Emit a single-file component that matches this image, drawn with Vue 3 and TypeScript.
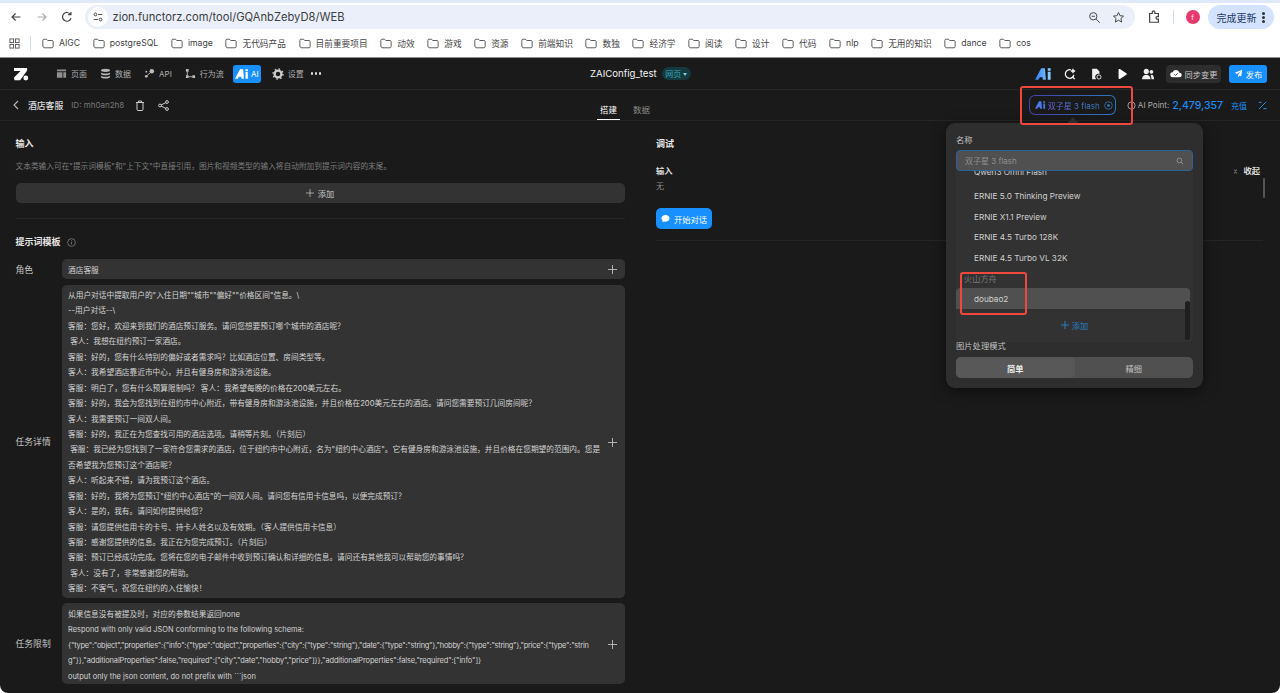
<script setup lang="ts">
const fw = (s: string): string =>
  s.replace(/,/g, '\uFF0C').replace(/:/g, '\uFF1A').replace(/\?/g, '\uFF1F').replace(/!/g, '\uFF01').replace(/\(/g, '\uFF08').replace(/\)/g, '\uFF09')

const bookmarks: string[] = ['AIGC','postgreSQL','image','无代码产品','目前重要项目','动效','游戏','资源','前端知识','数独','经济学','阅读','设计','代码','nlp','无用的知识','dance','cos']
const hint = fw('文本类输入可在"提示词模板"和"上下文"中直接引用,图片和视频类型的输入将自动附加到提示词内容的末尾。')
const detail: string[] = [
  '从用户对话中提取用户的"入住日期""城市""偏好""价格区间"信息。\\',
  '--用户对话--\\',
  '客服:您好,欢迎来到我们的酒店预订服务。请问您想要预订哪个城市的酒店呢?',
  ' 客人:我想在纽约预订一家酒店。',
  '客服:好的,您有什么特别的偏好或者需求吗?比如酒店位置、房间类型等。',
  '客人:我希望酒店靠近市中心,并且有健身房和游泳池设施。',
  '客服:明白了,您有什么预算限制吗? 客人:我希望每晚的价格在200美元左右。',
  '客服:好的,我会为您找到在纽约市中心附近,带有健身房和游泳池设施,并且价格在200美元左右的酒店。请问您需要预订几间房间呢?',
  '客人:我需要预订一间双人间。',
  '客服:好的,我正在为您查找可用的酒店选项。请稍等片刻。(片刻后)',
  ' 客服:我已经为您找到了一家符合您需求的酒店,位于纽约市中心附近,名为"纽约中心酒店"。它有健身房和游泳池设施,并且价格在您期望的范围内。您是否希望我为您预订这个酒店呢?',
  '客人:听起来不错,请为我预订这个酒店。',
  '客服:好的,我将为您预订"纽约中心酒店"的一间双人间。请问您有信用卡信息吗,以便完成预订?',
  '客人:是的,我有。请问如何提供给您?',
  '客服:请您提供信用卡的卡号、持卡人姓名以及有效期。(客人提供信用卡信息)',
  '客服:感谢您提供的信息。我正在为您完成预订。(片刻后)',
  '客服:预订已经成功完成。您将在您的电子邮件中收到预订确认和详细的信息。请问还有其他我可以帮助您的事情吗?',
  ' 客人:没有了,非常感谢您的帮助。',
  '客服:不客气,祝您在纽约的入住愉快!'
].map(fw)
const limits: { text: string; kind: string }[] = [
  { text: fw('如果信息没有被提及时,对应的参数结果返回none'), kind: 'cjk' },
  { text: 'Respond with only valid JSON conforming to the following schema:', kind: '' },
  { text: '{"type":"object","properties":{"info":{"type":"object","properties":{"city":{"type":"string"},"date":{"type":"string"},"hobby":{"type":"string"},"price":{"type":"strin', kind: 'json' },
  { text: 'g"}},"additionalProperties":false,"required":["city","date","hobby","price"]}},"additionalProperties":false,"required":["info"]}', kind: 'json2' },
  { text: 'output only the json content, do not prefix with ```json', kind: '' }
]
const models: string[] = ['Qwen3 Omni Flash','ERNIE 5.0 Thinking Preview','ERNIE X1.1 Preview','ERNIE 4.5 Turbo 128K','ERNIE 4.5 Turbo VL 32K']
</script>

<template>
  <div class="page">
    <header class="toolbar">
      <svg class="tb-icon" viewBox="0 0 16 16"><path d="M13 8H3.500M7.500 4 3.500 8l4 4" /></svg>
      <svg class="tb-icon dim" viewBox="0 0 16 16"><path d="M3 8h9.500M8.500 4l4 4-4 4" /></svg>
      <svg class="tb-icon" viewBox="0 0 16 16"><path d="M12.600 9.500A5 5 0 1 1 12 5M12.500 2.200V5.400H9.300" /></svg>
      <div class="omnibox">
        <span class="site-chip">
          <svg viewBox="0 0 14 14"><circle cx="4" cy="4" r="1.600" /><path d="M7 4h5M2 10h5" /><circle cx="10" cy="10" r="1.600" /></svg>
        </span>
        <span class="url">zion.functorz.com/tool/GQAnbZebyD8/WEB</span>
        <span class="grow"></span>
        <svg class="om-icon" viewBox="0 0 16 16"><circle cx="6.500" cy="6.500" r="4.500" /><path d="m10 10 4.500 4.500M4.500 6.500h4" /></svg>
        <svg class="om-icon" viewBox="0 0 16 16"><path d="m8 1.800 1.900 4 4.300.5-3.200 3 .9 4.300L8 11.400l-3.900 2.200.9-4.300-3.200-3 4.300-.5z" /></svg>
      </div>
      <svg class="tb-icon ext" viewBox="0 0 16 16"><path d="M3 4h3V2.500a1.500 1.500 0 0 1 3 0V4h4v3.500h-1.200a1.500 1.500 0 0 0 0 3H13V14H3z" /></svg>
      <span class="tb-sep"></span>
      <span class="avatar">f</span>
      <div class="update">完成更新 <i></i></div>
    </header>

    <nav class="bookmarks">
      <svg class="apps" viewBox="0 0 12 12"><rect x="1" y="1" width="4" height="4" /><rect x="7" y="1" width="4" height="4" /><rect x="1" y="7" width="4" height="4" /><rect x="7" y="7" width="4" height="4" /></svg>
      <span class="bm-sep"></span>
      <span v-for="b in bookmarks" :key="b" class="bm">
        <svg viewBox="0 0 14 12"><path d="M1 2.500C1 1.700 1.500 1 2.300 1h3l1.400 1.500h5c.8 0 1.300.6 1.300 1.300v5.700c0 .8-.5 1.500-1.300 1.500H2.300C1.500 10.500 1 9.800 1 9z" /></svg>
        {{ b }}
      </span>
    </nav>

    <div class="app">
      <div class="app-head">
        <div class="head-left">
          <svg class="logo" viewBox="0 0 18 16"><path d="M1 1h15v3L8 15H1.500L1 12l7.500-7.500H1z" fill="#fff" /><circle cx="14.500" cy="12.500" r="2.800" fill="#fff" /></svg>
          <span class="nav"><svg viewBox="0 0 12 12"><path d="M1 1.500h10v2H1zM1 4.500h6v6H1zM8 4.500h3v6H8z" fill="#8f8f8f" /></svg>页面</span>
          <span class="nav"><svg viewBox="0 0 12 12"><ellipse cx="6" cy="2.500" rx="5" ry="1.800" fill="#b5b5b5" /><path d="M1 5c1 1.500 9 1.500 10 0v1.500c-1 2-9 2-10 0zM1 8.500c1 1.500 9 1.500 10 0V10c-1 2-9 2-10 0z" fill="#b5b5b5" /></svg>数据</span>
          <span class="nav"><svg viewBox="0 0 12 12"><circle cx="8.500" cy="3.500" r="2.500" fill="#bbb" /><circle cx="2.500" cy="9" r="1.500" fill="#bbb" /><circle cx="2.500" cy="4" r="1" fill="#bbb" /><path d="M3 8.500 7 5" stroke="#bbb" /></svg>API</span>
          <span class="nav"><svg viewBox="0 0 12 12"><path d="M1 1h3v3H1zM1 8h3v3H1zM8 8h3v3H8z" fill="#bbb" /><path d="M2.500 4v4M4 9.500h4" stroke="#bbb" /></svg>行为流</span>
          <span class="nav-ai">
            <svg class="ai-logo" viewBox="0 0 18 12"><path d="M0 12 6.500 0h4l1 12H8.300L8 9.500H5L3.600 12z" fill="#fff" /><path d="M13.500 3.500h3V12h-3zM13.500 0h3v2.500h-3z" fill="#fff" /></svg>AI
          </span>
          <span class="nav"><svg class="gear" viewBox="0 0 12 12"><circle cx="6" cy="6" r="3.400" fill="none" stroke="#ccc" stroke-width="2.300" /><circle cx="6" cy="6" r="5" fill="none" stroke="#ccc" stroke-width="1.500" stroke-dasharray="1.500 2.420" /></svg>设置</span>
          <span class="dots"><i></i><i></i><i></i></span>
        </div>
        <div class="head-title">
          <span>ZAIConfig_test</span>
          <span class="chip">网页 <i></i></span>
        </div>
        <div class="head-right">
          <svg class="ai-big" viewBox="0 0 18 12">
            <defs><linearGradient id="aiGrad" x1="0" x2="1" y1="0" y2="0"><stop offset="0" stop-color="#2f7bf0" /><stop offset="1" stop-color="#8fd6ff" /></linearGradient></defs>
            <path d="M0 12 6.500 0h4l1 12H8.300L8 9.500H5L3.600 12zM13.500 3.500h3V12h-3zM13.500 0h3v2.500h-3z" fill="url(#aiGrad)" />
          </svg>
          <svg class="hr-icon" viewBox="0 0 14 14"><path d="M11.500 8A5 5 0 1 1 8 2.200" fill="none" stroke="#fff" stroke-width="1.500" /><path d="M10.500 1v5M8 3.500h5M10 10.500l2.500 2.500" fill="none" stroke="#fff" stroke-width="1.500" /></svg>
          <svg class="hr-icon" viewBox="0 0 14 14"><path d="M2.500 1H8l3 3v3a3.500 3.500 0 0 0-3.500 6h-5z" fill="#eee" /><circle cx="10.500" cy="10.500" r="2.400" fill="none" stroke="#eee" /></svg>
          <svg class="hr-icon" viewBox="0 0 14 14"><path d="M3 2c0-1 1-1 1.500-.7l7.500 4.800c.7.500.7 1.300 0 1.800L4.500 12.700C4 13 3 13 3 12z" fill="#fff" /></svg>
          <svg class="hr-icon" viewBox="0 0 14 14"><circle cx="5" cy="4" r="3" fill="#eee" /><path d="M0 13c0-7 10-7 10 0z" fill="#eee" /><circle cx="11" cy="4.500" r="2.200" fill="#eee" /><path d="M11 8c2 0 3 2 3 5h-3c0-2 0-3-1-4z" fill="#eee" /></svg>
          <span class="sync"><svg viewBox="0 0 14 12"><path d="M3.500 10.500a3 3 0 0 1-.5-6 4.200 4.200 0 0 1 8 .6 2.700 2.700 0 0 1 0 5.400z" fill="#fff" /><path d="m5 6.800 1.500 1.500L9 5.700" fill="none" stroke="#333" stroke-width="1" /></svg>同步变更</span>
          <span class="publish"><svg viewBox="0 0 12 12"><path d="M11 1 1 5l3 1.800L9 3 5.500 7.500V11l2-2.400L9.500 10z" fill="#fff" /></svg>发布</span>
        </div>
      </div>

      <div class="sub-head">
        <div class="sub-left">
          <svg class="back" viewBox="0 0 6 10"><path d="M5 1 1 5l4 4" /></svg>
          <b>酒店客服</b>
          <span class="id">ID: mh0an2h8</span>
          <svg class="sub-icon trash" viewBox="0 0 10 11"><path d="M1 2.500h8M2 2.500V9.500c0 .6.400 1 1 1h4c.6 0 1-.4 1-1V2.500M3.500 2.500V1h3v1.500" /></svg>
          <svg class="sub-icon share" viewBox="0 0 11 11"><circle cx="2" cy="5.500" r="1.400" /><circle cx="9" cy="2" r="1.400" /><circle cx="9" cy="9" r="1.400" /><path d="M3 5 8 2.500M3 6l5 2.500" /></svg>
        </div>
        <div class="tabs">
          <span class="tab on">搭建</span>
          <span class="tab">数据</span>
        </div>
        <div class="sub-right">
          <span class="model-btn">
            <svg class="ai-small" viewBox="0 0 18 12">
              <path d="M0 12 6.500 0h4l1 12H8.300L8 9.500H5L3.600 12zM13.500 3.500h3V12h-3zM13.500 0h3v2.500h-3z" fill="#4a78e8" />
            </svg>
            <span class="model-name">双子星 3 flash</span>
            <svg class="model-dot" viewBox="0 0 10 10"><circle cx="5" cy="5" r="4.200" /><circle cx="5" cy="5" r="1.400" fill="#3b82c4" stroke="none" /></svg>
          </span>
          <span class="points-label"><svg viewBox="0 0 10 10"><circle cx="5" cy="5" r="4" /><path d="M5 2.500v3" /></svg>AI Point:</span>
          <span class="points">2,479,357</span>
          <span class="recharge">充值</span>
          <svg class="percent" viewBox="0 0 10 10"><path d="M1 1.500h3M1 9 9 1M6 8.500h3.500M1.500 9.500h0" /></svg>
        </div>
      </div>

      <main class="body">
        <section class="left">
          <h3 class="h-input">输入</h3>
          <p class="hint">{{ hint }}</p>
          <div class="add-bar"><svg class="plus" viewBox="0 0 10 10"><path d="M5 0v10M0 5h10" /></svg> 添加</div>
          <div class="rule"></div>
          <h3 class="h-tpl">提示词模板 <svg viewBox="0 0 10 10"><circle cx="5" cy="5" r="4.300" /><path d="M5 4.200v3M5 2.500v.8" /></svg></h3>
          <div class="row">
            <label>角色</label>
            <div class="box single"><span>酒店客服</span><svg class="plus big" viewBox="0 0 10 10"><path d="M5 0v10M0 5h10" /></svg></div>
          </div>
          <div class="row detail-row">
            <label>任务详情</label>
            <div class="box multi">
              <div class="lines"><p v-for="(l, i) in detail" :key="i">{{ l }}</p></div>
              <svg class="plus big" viewBox="0 0 10 10"><path d="M5 0v10M0 5h10" /></svg>
            </div>
          </div>
          <div class="row">
            <label>任务限制</label>
            <div class="box multi">
              <div class="lines latin"><p v-for="(l, i) in limits" :key="i" :class="l.kind">{{ l.text }}</p></div>
              <svg class="plus big" viewBox="0 0 10 10"><path d="M5 0v10M0 5h10" /></svg>
            </div>
          </div>
        </section>

        <section class="right">
          <div class="right-inner">
            <h3 class="h-input">调试</h3>
            <div class="input-row">
              <b>输入</b>
              <span class="collapse"><svg viewBox="0 0 8 8"><path d="m1.500 1 2.500 2 2.500-2M1.500 7 4 5l2.500 2" /></svg>收起</span>
            </div>
            <span class="none">无</span>
            <span class="start"><svg viewBox="0 0 10 10"><path d="M5 1c2.500 0 4.500 1.600 4.500 3.800S7.500 8.500 5 8.500c-.5 0-1 0-1.500-.2L1.500 9.300l.4-1.800C1 6.800.5 5.800.5 4.800.5 2.600 2.500 1 5 1z" fill="#fff" /></svg>开始对话</span>
            <div class="rule right-rule"></div>
          </div>
          <span class="right-scroll"></span>
        </section>
      </main>

      <div class="popover">
        <span class="pop-arrow"></span>
        <div class="pop-label">名称</div>
        <div class="pop-input">
          <span>双子星 3 flash</span>
          <svg viewBox="0 0 10 10"><circle cx="4.300" cy="4.300" r="3" /><path d="m6.500 6.500 2.500 2.500" /></svg>
        </div>
        <div class="pop-list">
          <div v-for="(m, i) in models" :key="m" class="model" :class="{ first: i === 0 }">{{ m }}</div>
          <div class="group">火山方舟</div>
          <div class="model active">doubao2</div>
          <div class="pop-add"><svg class="plus blue" viewBox="0 0 10 10"><path d="M5 0v10M0 5h10" /></svg> 添加</div>
          <span class="pop-scroll"></span>
        </div>
        <div class="pop-label second">图片处理模式</div>
        <div class="seg"><span class="seg-on">简单</span><span>精细</span></div>
      </div>

      <span class="mark mark-a"></span>
      <span class="mark mark-b"></span>
    </div>
  </div>
</template>

<style>
html, body { margin: 0; background: #fff; overflow: hidden; }
</style>

<style scoped>
* { box-sizing: border-box; }
p, h3 { margin: 0; font-weight: inherit; }
.page { width: 1280px; height: 693px; display: flex; flex-direction: column; font-family: Inter, "Noto Sans CJK SC", sans-serif; overflow: hidden; position: relative; background: #fff; }

.toolbar { height: 31px; flex: none; display: flex; align-items: center; padding: 0 4px 0 9px; background: #fff; border-top: 3px solid #dfe9f8; }
.tb-icon { width: 14px; height: 14px; fill: none; stroke: #444; stroke-width: 1.400; margin-right: 11.500px; flex: none; }
.tb-icon.dim { stroke: #aaa; }
.omnibox { width: 1050px; height: 24px; margin-left: -1px; margin-right: 12px; background: #eaeff9; border-radius: 12px; display: flex; align-items: center; padding: 0 10px 0 3px; flex: none; }
.site-chip { width: 20px; height: 20px; border-radius: 50%; background: #fff; display: grid; place-items: center; flex: none; margin-right: 5px; }
.site-chip svg { width: 12px; height: 12px; fill: none; stroke: #444; stroke-width: 1.100; }
.url { font-size: 11.200px; color: #3c4043; }
.grow { flex: 1; }
.om-icon { width: 13px; height: 13px; fill: none; stroke: #444; stroke-width: 1.200; margin-left: 11px; flex: none; }
.ext { margin-right: 12px; }
.tb-sep { width: 1px; height: 14px; background: #cfdcf0; margin-right: 12px; flex: none; }
.avatar { width: 14px; height: 14px; border-radius: 50%; background: #e8396f; color: #fff; font-size: 7px; display: grid; place-items: center; margin-right: 8px; flex: none; }
.update { width: 66px; height: 24px; background: #d3e3fd; border-radius: 12px; color: #1f3a66; font-size: 10px; display: flex; align-items: center; padding-left: 9px; white-space: nowrap; flex: none; }
.update i { width: 3px; height: 3px; margin-left: 5px; background: #333; border-radius: 50%; box-shadow: 0 -4px #333, 0 4px #333; flex: none; }

.bookmarks { height: 27px; flex: none; display: flex; align-items: center; padding: 0 0 2px 9px; background: #fff; font-size: 8.700px; color: #444; border-bottom: 1px solid #8f8f8f; }
.apps { width: 11px; height: 11px; fill: none; stroke: #555; stroke-width: 1; flex: none; }
.bm-sep { width: 1px; height: 14px; background: #cfdcf0; margin: 0 11px 0 10px; flex: none; }
.bm { display: inline-flex; align-items: center; gap: 5px; margin-right: 12.600px; white-space: nowrap; }
.bm svg { width: 12px; height: 11px; fill: none; stroke: #444; stroke-width: 1; flex: none; }

.app { flex: 1; min-height: 0; background: #1a1a1a; color: #e5e5e5; display: flex; flex-direction: column; position: relative; border-radius: 0 0 8px 8px; }
.app-head { height: 32px; flex: none; display: flex; align-items: center; justify-content: space-between; border-bottom: 1px solid #262626; padding: 0 13px; position: relative; }
.head-left { display: flex; align-items: center; }
.logo { width: 16px; height: 14px; margin-right: 27px; flex: none; }
.nav { display: inline-flex; align-items: center; gap: 4px; font-size: 8px; color: #aeaeae; margin-right: 13px; white-space: nowrap; }
.nav svg { width: 11px; height: 11px; flex: none; }
.nav .gear { width: 12px; height: 12px; }
.nav-ai { width: 28px; height: 18px; background: #1890ff; border-radius: 3px; font-size: 8px; color: #fff; display: inline-flex; align-items: center; justify-content: center; gap: 2px; margin: 0 11px 0 -4px; flex: none; }
.ai-logo { width: 14px; height: 10px; flex: none; }
.ai-big { width: 17px; height: 12px; margin-right: 12px; flex: none; }
.ai-small { width: 11px; height: 8px; margin-right: 2px; flex: none; }
.dots { display: inline-flex; gap: 1.500px; margin-left: -6px; }
.dots i { width: 2.500px; height: 2.500px; border-radius: 50%; background: #ddd; }
.head-title { position: absolute; left: 590px; display: flex; align-items: center; gap: 5px; font-size: 9.600px; color: #f2f2f2; white-space: nowrap; }
.chip { height: 13px; width: 29px; background: #143a40; color: #38a3b5; border-radius: 7px; font-size: 8px; display: inline-flex; align-items: center; justify-content: center; gap: 2px; }
.chip i { width: 0; height: 0; border: 2px solid transparent; border-top: 3px solid #7fd0dc; margin-top: 3px; }
.head-right { display: flex; align-items: center; }
.hr-icon { width: 12px; height: 12px; margin-right: 14px; flex: none; }
.sync { width: 55px; height: 18px; background: #2d2d2d; border-radius: 4px; display: inline-flex; align-items: center; justify-content: center; gap: 3px; font-size: 8.200px; color: #ccc; margin-right: 8px; margin-left: -2px; }
.sync svg { width: 12px; height: 11px; flex: none; }
.publish { width: 38px; height: 18px; background: #1890ff; border-radius: 3px; display: inline-flex; align-items: center; justify-content: center; gap: 3px; font-size: 8.200px; color: #fff; }
.publish svg { width: 9px; height: 9px; flex: none; }

.sub-head { height: 31px; flex: none; display: flex; align-items: center; border-bottom: 1px solid #262626; padding: 0 13px; position: relative; }
.sub-left { display: flex; align-items: center; font-size: 8.800px; width: 584px; }
.sub-left b { font-weight: 500; color: #ddd; margin: 0 8px 0 0; }
.back { width: 6px; height: 10px; fill: none; stroke: #bbb; stroke-width: 1.100; margin-right: 9px; flex: none; }
.id { color: #777; font-size: 8px; }
.sub-icon { fill: none; stroke: #ccc; stroke-width: 1; flex: none; }
.trash { width: 10px; height: 11px; margin-left: 11px; }
.share { width: 11px; height: 11px; margin-left: 13px; }
.tabs { display: flex; gap: 10px; align-self: stretch; align-items: center; font-size: 8.500px; color: #8a8a8a; }
.tab { height: 100%; display: flex; align-items: center; width: 23px; justify-content: center; padding-top: 8px; }
.tab.on { color: #fff; border-bottom: 1.500px solid #fff; }
.sub-right { position: absolute; right: 13px; top: 0; height: 30px; display: flex; align-items: center; }
.model-btn { width: 87px; height: 20px; border: 1px solid transparent; background: linear-gradient(#1a1a1a, #1a1a1a) padding-box, linear-gradient(90deg, #4a3fb0, #2a78c0) border-box; border-radius: 6px; display: inline-flex; align-items: center; padding-left: 5px; white-space: nowrap; margin-right: 11px; flex: none; }
.model-name { font-size: 8px; background: linear-gradient(90deg, #6b63e8, #3b82c4); -webkit-background-clip: text; background-clip: text; color: transparent; }
.model-dot { width: 9px; height: 9px; margin-left: 4px; fill: none; stroke: #3b82c4; stroke-width: .8; flex: none; }
.points-label { display: inline-flex; align-items: center; gap: 2px; font-size: 8px; color: #aaa; margin-right: 3px; white-space: nowrap; }
.points-label svg { width: 9px; height: 9px; fill: none; stroke: #aaa; stroke-width: 1; flex: none; }
.points { font-size: 10.500px; font-weight: 500; color: #1a8cf0; margin-right: 8px; }
.recharge { font-size: 8px; color: #1a8cf0; margin-right: 11px; }
.percent { width: 9px; height: 9px; fill: none; stroke: #2a93ee; stroke-width: 1.100; flex: none; }

.body { flex: 1; min-height: 0; display: flex; overflow: hidden; }
.left { width: 640px; flex: none; padding: 16px 15.500px 0; display: flex; flex-direction: column; }
.left > * { flex: none; }
.h-input { font-size: 9px; font-weight: 600; color: #e6e6e6; line-height: 14px; }
.hint { font-size: 7.700px; line-height: 12px; color: #7d7d7d; margin-top: 10px; }
.add-bar { height: 20px; background: #333; border-radius: 5px; margin-top: 10px; display: flex; align-items: center; justify-content: center; gap: 4px; font-size: 8.200px; color: #ccc; }
.plus { width: 8px; height: 8px; fill: none; stroke: #ccc; stroke-width: .9; flex: none; }
.plus.big { width: 9px; height: 9px; }
.plus.blue { stroke: #2a7fc9; stroke-width: 1.200; }
.rule { height: 1px; background: #262626; flex: none; }
.left > .rule { margin-top: 15px; }
.h-tpl { display: flex; align-items: center; gap: 6px; font-size: 9px; font-weight: 600; color: #e6e6e6; margin-top: 16px; line-height: 14px; }
.h-tpl svg { width: 9px; height: 9px; fill: none; stroke: #888; stroke-width: .8; }
.row { display: flex; align-items: center; margin-top: 5px; }
.h-tpl + .row { margin-top: 10px; }
.row.detail-row { margin-top: 6px; }
.row label { width: 46.500px; flex: none; font-size: 8.800px; color: #c4c4c4; }
.box { flex: 1; min-width: 0; background: #333; border-radius: 5px; display: flex; align-items: center; padding: 0 8px 0 6px; font-size: 7.700px; color: #d4d4d4; justify-content: space-between; }
.box.single { height: 20px; }
.box.multi { padding-top: 3px; padding-bottom: 1.200px; }
.lines { flex: 1; min-width: 0; padding-right: 1px; }
.lines p { line-height: 15.440px; word-break: break-all; white-space: pre-wrap; }
.lines.latin { margin: 1px 0 -1px; }
.lines.latin p { white-space: nowrap; word-break: normal; font-size: 7.450px; }
.lines.latin p.cjk { font-size: 7.700px; }
.lines.latin p.json { letter-spacing: -.25px; }
.lines.latin p.json2 { letter-spacing: -.12px; }

.right { flex: 1; min-width: 0; position: relative; padding: 16px 17px 0 16px; }
.input-row { display: flex; justify-content: space-between; margin-top: 14px; font-size: 8.300px; line-height: 12px; }
.input-row b { font-weight: 600; color: #ddd; }
.collapse { display: inline-flex; align-items: center; gap: 5px; font-weight: 600; color: #ddd; margin-right: 3px; }
.collapse svg { width: 5px; height: 7px; fill: none; stroke: #ccc; stroke-width: 1; flex: none; }
.none { display: block; font-size: 8px; color: #8b8b8b; margin-top: 3px; line-height: 12px; }
.start { width: 56px; height: 21px; background: #1890ff; color: #fff; border-radius: 5px; display: flex; align-items: center; justify-content: center; gap: 4px; font-size: 8.300px; margin-top: 16px; }
.start svg { width: 9px; height: 9px; flex: none; }
.right-rule { margin-top: 11px; }
.right-scroll { position: absolute; right: 15px; top: 57px; width: 2px; height: 20px; background: #555; border-radius: 1px; }

.popover { position: absolute; left: 946px; top: 65px; width: 257px; height: 265px; background: #2e2e2e; border-radius: 9px; padding: 11px 10px 0; box-shadow: 0 3px 14px rgba(0,0,0,.5); }
.pop-arrow { position: absolute; left: 123px; top: -4px; width: 8px; height: 8px; background: #2e2e2e; transform: rotate(45deg); }
.pop-label { font-size: 8.300px; color: #c0c0c0; line-height: 12px; }
.pop-label.second { margin-top: -2px; height: 17px; position: relative; }
.pop-input { height: 21px; margin-top: 4px; background: #505050; border: 1px solid #2c6298; border-radius: 4px; display: flex; align-items: center; justify-content: space-between; padding: 0 8px; font-size: 8px; color: #8f8f8f; position: relative; z-index: 1; }
.pop-input svg { width: 8px; height: 8px; fill: none; stroke: #999; stroke-width: 1; }
.pop-list { height: 171px; background: #323232; border-radius: 0 0 5px 5px; position: relative; overflow: hidden; font-size: 8.200px; color: #cfcfcf; }
.model { height: 20.700px; display: flex; align-items: center; padding-left: 18px; }
.model.first { margin-top: -9px; margin-bottom: 3px; }
.group { height: 20px; display: flex; align-items: center; padding-left: 8px; color: #777; }
.model.active { width: 234px; background: #505050; border-radius: 4px 4px 0 0; }
.pop-add { height: 32px; display: flex; align-items: center; justify-content: center; gap: 3px; color: #2a7fc9; }
.pop-scroll { position: absolute; right: 3px; top: 130px; width: 5px; height: 39px; background: #1f1f1f; border-radius: 3px; }
.seg { height: 21px; background: #505050; border-radius: 5px; display: flex; font-size: 8.200px; color: #c0c0c0; }
.seg span { flex: 1; display: flex; align-items: center; justify-content: center; }
.seg .seg-on { background: #585858; border-radius: 5px; color: #eee; font-weight: 600; }

.mark { position: absolute; border: 2px solid #f0473e; border-radius: 3px; pointer-events: none; }
.mark-a { left: 1020px; top: 28px; width: 113px; height: 39px; }
.mark-b { left: 960px; top: 214px; width: 67px; height: 43px; }
</style>
